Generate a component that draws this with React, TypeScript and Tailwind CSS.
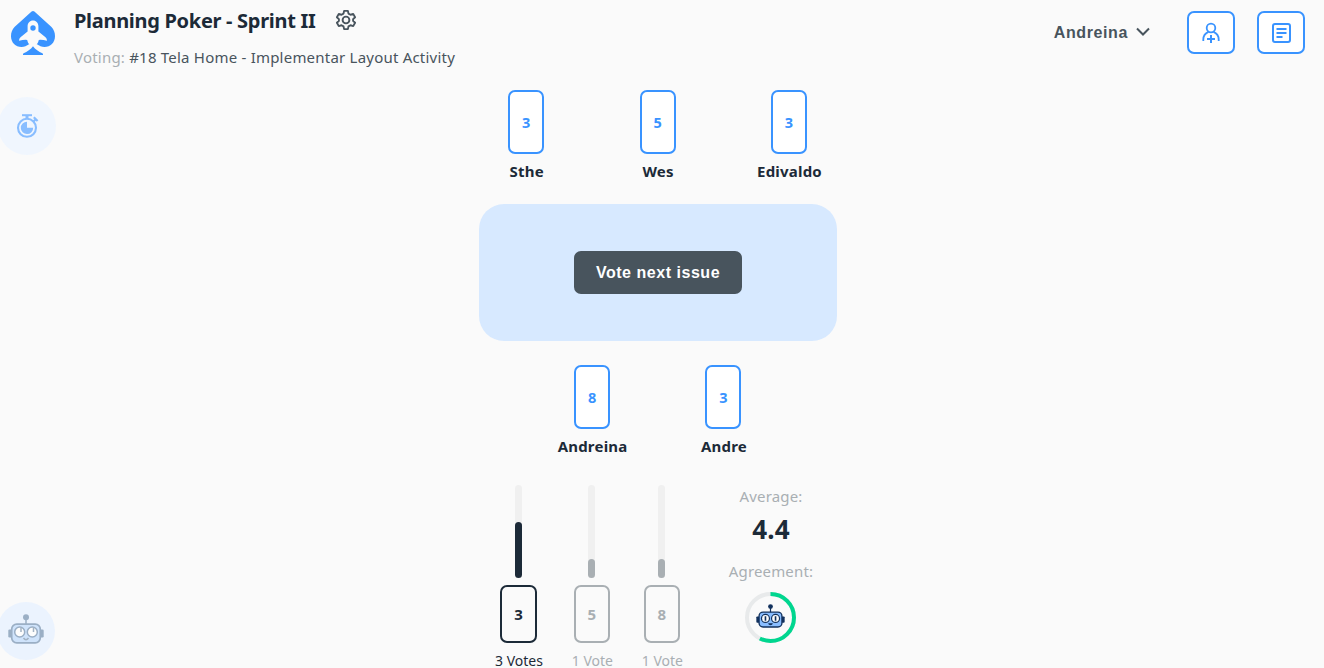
import React from "react";

const FONT = "font-['Segoe_UI','Noto_Sans','Open_Sans',sans-serif]";

function Logo() {
  return (
    <svg width="44" height="44" viewBox="0 0 44 44" className="shrink-0">
      <path
        d="M20.600 .6Q22-.6 23.400 .6L40.500 16C42.800 18.500 44 21.600 44 25.200C44 31.500 39.400 36 33.500 36C30.600 36 28.300 34.800 26 33.300H18C15.700 34.800 13.400 36 10.500 36C4.600 36 0 31.500 0 25.200C0 21.600 1.200 18.500 3.500 16Z"
        fill="#3993ff"
      />
      <path
        d="M22 9.500C18.800 9.500 16.600 12 16.600 15.200V20.600L9.500 26.300Q8 27.600 8 29.800Q12.500 28.600 16.200 28.900C16.600 30.800 17.200 32 18.400 33.400L17 36.500H27L25.600 33.400C26.800 32 27.400 30.800 27.800 28.900Q31.500 28.600 36 29.800Q36 27.600 34.500 26.300L27.400 20.600V15.200C27.400 12 25.200 9.500 22 9.500Z"
        fill="#fafafa"
      />
      <circle cx="22" cy="17" r="2.700" fill="#3993ff" />
      <path d="M22 35.200C24.200 38.400 27.800 40.500 31.400 42.200Q32.300 43 32 44H12Q11.700 43 12.600 42.200C16.200 40.500 19.800 38.400 22 35.200Z" fill="#3993ff" />
    </svg>
  );
}

function Gear() {
  return (
    <svg width="22" height="22" viewBox="0 0 22 22" fill="none" stroke="#48545d" strokeWidth="1.9" strokeLinejoin="round">
      <path d="M9.100 1.900H12.900L13.500 4.600L15.500 5.750L18.200 4.900L20.100 8.200L18.100 10.100V11.900L20.100 13.800L18.200 17.100L15.500 16.250L13.500 17.400L12.900 20.100H9.100L8.500 17.400L6.500 16.250L3.800 17.100L1.900 13.800L3.900 11.900V10.100L1.900 8.200L3.800 4.900L6.500 5.750L8.500 4.600Z" />
      <circle cx="11" cy="11" r="3.400" />
    </svg>
  );
}

function InviteIcon() {
  return (
    <svg width="20" height="22" viewBox="0 0 20 22" fill="none" stroke="#3993ff" strokeWidth="1.8">
      <circle cx="10" cy="6" r="4.300" />
      <path d="M2.300 19V17.500C2.300 14 4.500 11 7.500 9.800M17.700 19V17.500C17.700 14 15.500 11 12.500 9.800" />
      <path d="M10 13V21M6 17H14" strokeWidth="2" />
    </svg>
  );
}

function IssuesIcon() {
  return (
    <svg width="20" height="22" viewBox="0 0 20 22" fill="none" stroke="#3993ff">
      <rect x="2" y="2" width="17" height="18" rx="2" strokeWidth="2" />
      <path d="M5.500 7H15.500M5.500 11H15.500M5.500 15H11.500" strokeWidth="1.900" />
    </svg>
  );
}

function Timer() {
  return (
    <svg width="24" height="24" viewBox="0 0 24 24" fill="none" stroke="#88bdff">
      <circle cx="12" cy="13.800" r="9" strokeWidth="2.100" />
      <path d="M7 1.200H17" strokeWidth="2" />
      <path d="M12 1V4.500" strokeWidth="3" />
      <path d="M18.800 3.300L22.600 7M18.500 7.500L20.500 5.500" strokeWidth="2.200" />
      <path d="M12 7.700V13.800H18.200A6.200 6.200 0 1 1 12 7.700Z" fill="#88bdff" stroke="none" />
    </svg>
  );
}

function Robot({ faded = false }: { faded?: boolean }) {
  const line = faded ? "#9bafc5" : "#12315d";
  const face = faded ? "#cfe3fb" : "#89bdff";
  const pupil = faded ? "#a3b3c4" : "#12315d";
  return (
    <svg width={faded ? 36 : 29} height={faded ? 30 : 24} viewBox="0 0 36 30">
      <path d="M18 3V11" stroke={line} strokeWidth="1.500" />
      <circle cx="18" cy="3.200" r="3" fill={line} />
      <rect x="0.300" y="15.500" width="4" height="8" rx="1.200" fill={line} />
      <rect x="31.700" y="15.500" width="4" height="8" rx="1.200" fill={line} />
      <rect x="3.700" y="10.200" width="28.600" height="18.600" rx="5" fill={face} stroke={line} strokeWidth="1.700" />
      <circle cx="11.700" cy="18" r="5" fill="#fdfdfd" stroke={line} strokeWidth="1.500" />
      <circle cx="24.300" cy="18" r="5" fill="#fdfdfd" stroke={line} strokeWidth="1.500" />
      {faded ? (
        <>
          <path d="M13 13.500V18M25.500 13.500V18" stroke={pupil} strokeWidth="1.500" />
          <path d="M15.500 24Q18 27.500 20.500 24" stroke={pupil} strokeWidth="1.500" fill="none" />
        </>
      ) : (
        <>
          <path d="M11.700 15.200V20.800M24.300 15.200V20.800" stroke={pupil} strokeWidth="2" />
          <path d="M15 24H21Q20.500 26.500 18 26.500T15 24Z" fill={pupil} />
        </>
      )}
    </svg>
  );
}

function Player({ vote, name }: { vote: number; name: string }) {
  return (
    <div className="flex w-[131.400px] flex-col items-center">
      <div className="flex h-16 w-9 items-center justify-center rounded-[7px] border-2 border-[#3993ff] bg-white pt-px text-[14.500px] font-bold text-[#3993ff]">
        {vote}
      </div>
      <div className="mt-[7px] whitespace-nowrap pl-px text-[15px] leading-[20px] font-bold tracking-[0.200px] text-[#1c2a38]">{name}</div>
    </div>
  );
}

function Result({ value, label, fill, lead, cell, card }: { value: number; label: string; fill: string; lead?: boolean; cell: string; card: string }) {
  return (
    <div className={`flex flex-col items-center ${cell} ${lead ? "text-[#1c2a38]" : "text-[#a9afb3]"}`}>
      <div className="flex h-[93px] w-[7px] items-end rounded-full bg-[#f0f0f0]">
        <div className={`w-full rounded-full ${fill} ${lead ? "bg-[#1c2a38]" : "bg-[#a9afb3]"}`} />
      </div>
      <div className={`mt-[7px] flex h-[58px] items-center justify-center rounded-[7px] border-2 text-[15px] font-bold ${card} ${lead ? "border-[#1c2a38]" : "border-[#a9afb3]"}`}>
        {value}
      </div>
      <div className="mt-[11px] whitespace-nowrap pl-px text-[14px] leading-[14px]">{label}</div>
    </div>
  );
}

export default function App() {
  return (
    <div className={`relative h-[668px] w-full overflow-hidden bg-[#fafafa] ${FONT}`}>
      <header className="flex h-[90px] items-start justify-between pt-[11px] pr-[19px] pl-[11px]">
        <div className="flex">
          <Logo />
          <div className="-mt-[6px] ml-[19px]">
            <div className="flex h-[30px] items-center">
              <h1 className="pt-px whitespace-nowrap text-[20px] leading-[30px] font-bold tracking-[-0.300px] text-[#1c2a38]">Planning Poker - Sprint II</h1>
              <button className="ml-5 flex"><Gear /></button>
            </div>
            <p className="mt-[12px] whitespace-nowrap text-[15px] leading-[20px] tracking-[0.215px] text-[#48545d]">
              <span className="text-[#a9afb3]">Voting:</span> #18 Tela Home - Implementar Layout Activity
            </p>
          </div>
        </div>
        <div className="flex items-start">
          <button className="mr-[37px] flex h-[43px] items-center font-['Liberation_Sans',Arial,sans-serif] text-base font-bold tracking-[0.600px] text-[#48545d]">
            Andreina
            <svg width="14" height="10" viewBox="0 0 14 10" className="mb-[2px] ml-2" fill="none" stroke="#48545d" strokeWidth="2">
              <path d="M1 1.500L7 7.500L13 1.500" />
            </svg>
          </button>
          <button className="mr-[22px] flex h-[43px] w-12 items-center justify-center rounded-[7px] border-2 border-[#3993ff] bg-white"><InviteIcon /></button>
          <button className="flex h-[43px] w-12 items-center justify-center rounded-[7px] border-2 border-[#3993ff] bg-white"><IssuesIcon /></button>
        </div>
      </header>

      <main className="ml-[479px] w-[358px]">
        <div className="-ml-[18.500px] flex h-[114px] w-[395px]">
          <Player vote={3} name="Sthe" />
          <Player vote={5} name="Wes" />
          <Player vote={3} name="Edivaldo" />
        </div>
        <section className="flex h-[137px] items-center justify-center rounded-[25px] bg-[#d7e9ff]">
          <button className="h-[43px] w-[168px] rounded-[7px] bg-[#48545d] font-['Liberation_Sans',Arial,sans-serif] text-base font-bold tracking-[0.530px] text-white">
            Vote next issue
          </button>
        </section>
        <div className="mt-6 flex h-[120px] justify-center pr-[0.500px]">
          <Player vote={8} name="Andreina" />
          <Player vote={3} name="Andre" />
        </div>
        <div className="flex">
          <Result value={3} label="3 Votes" fill="h-[56px]" lead cell="w-[79px]" card="w-[37px]" />
          <Result value={5} label="1 Vote" fill="h-[19px]" cell="w-[67.800px]" card="w-9" />
          <Result value={8} label="1 Vote" fill="h-[19px]" cell="w-[72.200px]" card="w-9" />
          <div className="ml-[22px] flex w-[102px] flex-col items-center text-[15px] leading-[20px] tracking-[0.150px] text-[#a9afb3]">
            <div className="mt-[1px] whitespace-nowrap">Average:</div>
            <div className="mt-[6px] text-[26px] leading-[34px] font-bold text-[#1c2a38]">4.4</div>
            <div className="mt-[15px] whitespace-nowrap">Agreement:</div>
            <div className="mt-[11px] grid size-[51px] place-items-center">
              <svg width="51" height="51" viewBox="0 0 51 51" fill="none" strokeWidth="4" className="col-start-1 row-start-1">
                <circle cx="25.500" cy="25.500" r="23.500" stroke="#e8eaeb" />
                <circle cx="25.500" cy="25.500" r="23.500" stroke="#00d68f" pathLength="100" strokeDasharray="57.500 42.500" transform="rotate(-90 25.500 25.500)" />
              </svg>
              <div className="col-start-1 row-start-1 -mt-[3px] mr-px"><Robot /></div>
            </div>
          </div>
        </div>
      </main>

      <button className="absolute top-[97px] -left-[2px] flex size-[58px] items-center justify-center rounded-full bg-[#f0f6fe]"><Timer /></button>
      <button className="absolute top-[602px] -left-[3px] flex size-[58px] items-center justify-center rounded-full bg-[#ebf3fe] pb-1"><Robot faded /></button>
    </div>
  );
}
